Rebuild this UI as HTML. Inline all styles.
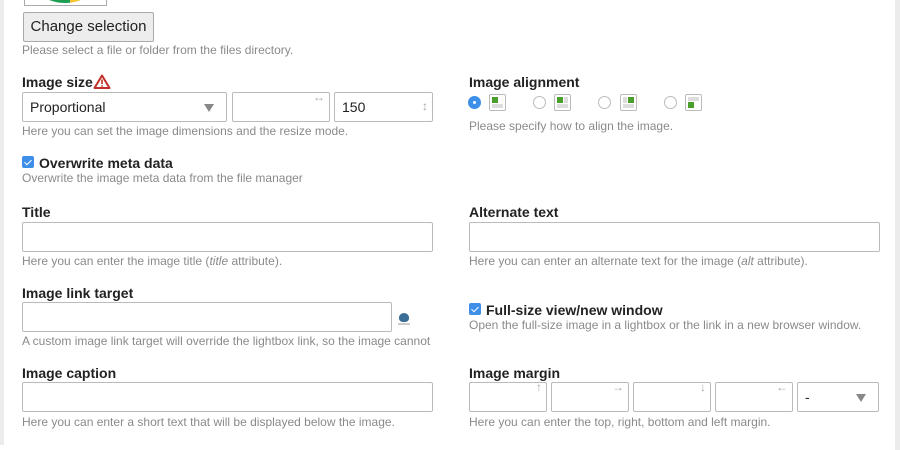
<!DOCTYPE html>
<html><head><meta charset="utf-8"><style>
*{box-sizing:border-box;margin:0;padding:0}
body{width:900px;height:450px;background:#fff;position:relative;overflow:hidden;font-family:"Liberation Sans",sans-serif;color:#222}
.a{position:absolute}
.lbl{position:absolute;font-size:14px;font-weight:bold;color:#222;line-height:16px}
.help{position:absolute;font-size:12px;color:#8a8a8a;line-height:14px;white-space:nowrap}
.inp{position:absolute;border:1px solid #bbb;border-radius:2px;background:#fff;height:30px}
.cb{position:absolute;width:12px;height:12px;background:#3d8fe8;border-radius:2px}
.cb:after{content:"";position:absolute;left:4px;top:2px;width:3px;height:6px;border:solid #fff;border-width:0 1.5px 1.5px 0;transform:rotate(45deg)}
.rd{position:absolute;width:13px;height:13px;border:1px solid #bbb;border-radius:50%;background:#fff;top:96px}
.ic{position:absolute;width:17px;height:17px;border:1px solid #bbb;border-radius:2px;background:#fff;top:94px}
.ic i{position:absolute;background:#ddd}
.ic b{position:absolute;background:#4a9e2a;width:6px;height:6px}
.ar{position:absolute;font-size:12px;color:#aaa;top:-3px}
.tri{position:absolute;right:12px;top:11px;width:0;height:0;border-left:5px solid transparent;border-right:5px solid transparent;border-top:8px solid #888}
</style></head><body>
<div class="a" style="left:0;top:0;width:4px;height:445px;background:#ececec"></div>
<div class="a" style="left:895px;top:0;width:5px;height:450px;background:#ececec"></div>
<div class="a" style="left:24px;top:-4px;width:83px;height:10px;border:1px solid #aaa;overflow:hidden;background:#fff">
<div class="a" style="left:8px;top:-40px;width:64px;height:46px;border-radius:50%;background:linear-gradient(90deg,#1e9e52 0,#1e9e52 58%,#f6c431 58%)"></div>
</div>
<div class="a" style="left:23px;top:12px;width:131px;height:30px;border:1px solid #aaa;border-radius:2px;background:#ededed;font-size:15px;line-height:28px;text-align:center;color:#222;padding-top:0">Change selection</div>
<div class="help" style="left:22px;top:43px">Please select a file or folder from the files directory.</div>

<div class="lbl" style="left:22px;top:74px">Image size</div>
<svg class="a" style="left:93px;top:74px" width="18" height="15" viewBox="0 0 18 15"><path d="M9 1.5 L16.5 14 H1.5 Z" fill="none" stroke="#c0302a" stroke-width="2" stroke-linejoin="round"/><path d="M9 5.5 V10" stroke="#c0302a" stroke-width="1.6"/><circle cx="9" cy="12" r="0.9" fill="#c0302a"/></svg>
<div class="inp" style="left:22px;top:92px;width:205px;font-size:14px;line-height:28px;padding-left:7px">Proportional<div class="tri"></div></div>
<div class="inp" style="left:232px;top:92px;width:98px"><span class="ar" style="right:4px">&#8596;</span></div>
<div class="inp" style="left:334px;top:92px;width:99px;font-size:14px;line-height:28px;padding-left:7px">150<span class="ar" style="right:4px;top:-1px">&#8597;</span></div>
<div class="help" style="left:22px;top:124px">Here you can set the image dimensions and the resize mode.</div>

<div class="cb" style="left:22px;top:156px"></div>
<div class="lbl" style="left:39px;top:155px">Overwrite meta data</div>
<div class="help" style="left:22px;top:171px">Overwrite the image meta data from the file manager</div>

<div class="lbl" style="left:22px;top:204px">Title</div>
<div class="inp" style="left:22px;top:222px;width:411px"></div>
<div class="help" style="left:22px;top:254px">Here you can enter the image title (<i>title</i> attribute).</div>

<div class="lbl" style="left:22px;top:285px">Image link target</div>
<div class="inp" style="left:22px;top:302px;width:370px"></div>
<div class="a" style="left:399px;top:313px;width:10px;height:9px;border-radius:50% 50% 40% 40%;background:#3b6e96"></div>
<div class="a" style="left:398px;top:323px;width:12px;height:2px;background:#ccc"></div>
<div class="help" style="left:22px;top:334px">A custom image link target will override the lightbox link, so the image cannot</div>

<div class="lbl" style="left:22px;top:365px">Image caption</div>
<div class="inp" style="left:22px;top:382px;width:411px"></div>
<div class="help" style="left:22px;top:415px">Here you can enter a short text that will be displayed below the image.</div>

<div class="lbl" style="left:469px;top:74px">Image alignment</div>
<div class="rd" style="left:468px;background:#3d8fe8;border-color:#3d8fe8"><div class="a" style="left:4px;top:4px;width:3px;height:3px;background:#fff;border-radius:50%"></div></div>
<div class="ic" style="left:489px"><b style="left:2px;top:2px"></b><i style="left:2px;top:9px;width:11px;height:4px"></i></div>
<div class="rd" style="left:533px"></div>
<div class="ic" style="left:554px"><b style="left:2px;top:2px"></b><i style="left:9px;top:2px;width:4px;height:6px"></i><i style="left:2px;top:9px;width:11px;height:4px"></i></div>
<div class="rd" style="left:598px"></div>
<div class="ic" style="left:620px"><b style="left:7px;top:2px"></b><i style="left:2px;top:2px;width:4px;height:6px"></i><i style="left:2px;top:9px;width:11px;height:4px"></i></div>
<div class="rd" style="left:664px"></div>
<div class="ic" style="left:685px"><i style="left:2px;top:2px;width:11px;height:4px"></i><b style="left:2px;top:7px"></b></div>
<div class="help" style="left:469px;top:119px">Please specify how to align the image.</div>

<div class="lbl" style="left:469px;top:204px">Alternate text</div>
<div class="inp" style="left:469px;top:222px;width:411px"></div>
<div class="help" style="left:469px;top:254px">Here you can enter an alternate text for the image (<i>alt</i> attribute).</div>

<div class="cb" style="left:469px;top:303px"></div>
<div class="lbl" style="left:486px;top:302px">Full-size view/new window</div>
<div class="help" style="left:469px;top:318px">Open the full-size image in a lightbox or the link in a new browser window.</div>

<div class="lbl" style="left:469px;top:365px">Image margin</div>
<div class="inp" style="left:469px;top:382px;width:78px"><span class="ar" style="right:4px">&#8593;</span></div>
<div class="inp" style="left:551px;top:382px;width:78px"><span class="ar" style="right:4px">&#8594;</span></div>
<div class="inp" style="left:633px;top:382px;width:78px"><span class="ar" style="right:4px">&#8595;</span></div>
<div class="inp" style="left:715px;top:382px;width:78px"><span class="ar" style="right:4px">&#8592;</span></div>
<div class="inp" style="left:797px;top:382px;width:82px;font-size:14px;line-height:28px;padding-left:7px">-<div class="tri"></div></div>
<div class="help" style="left:469px;top:415px">Here you can enter the top, right, bottom and left margin.</div>
</body></html>
